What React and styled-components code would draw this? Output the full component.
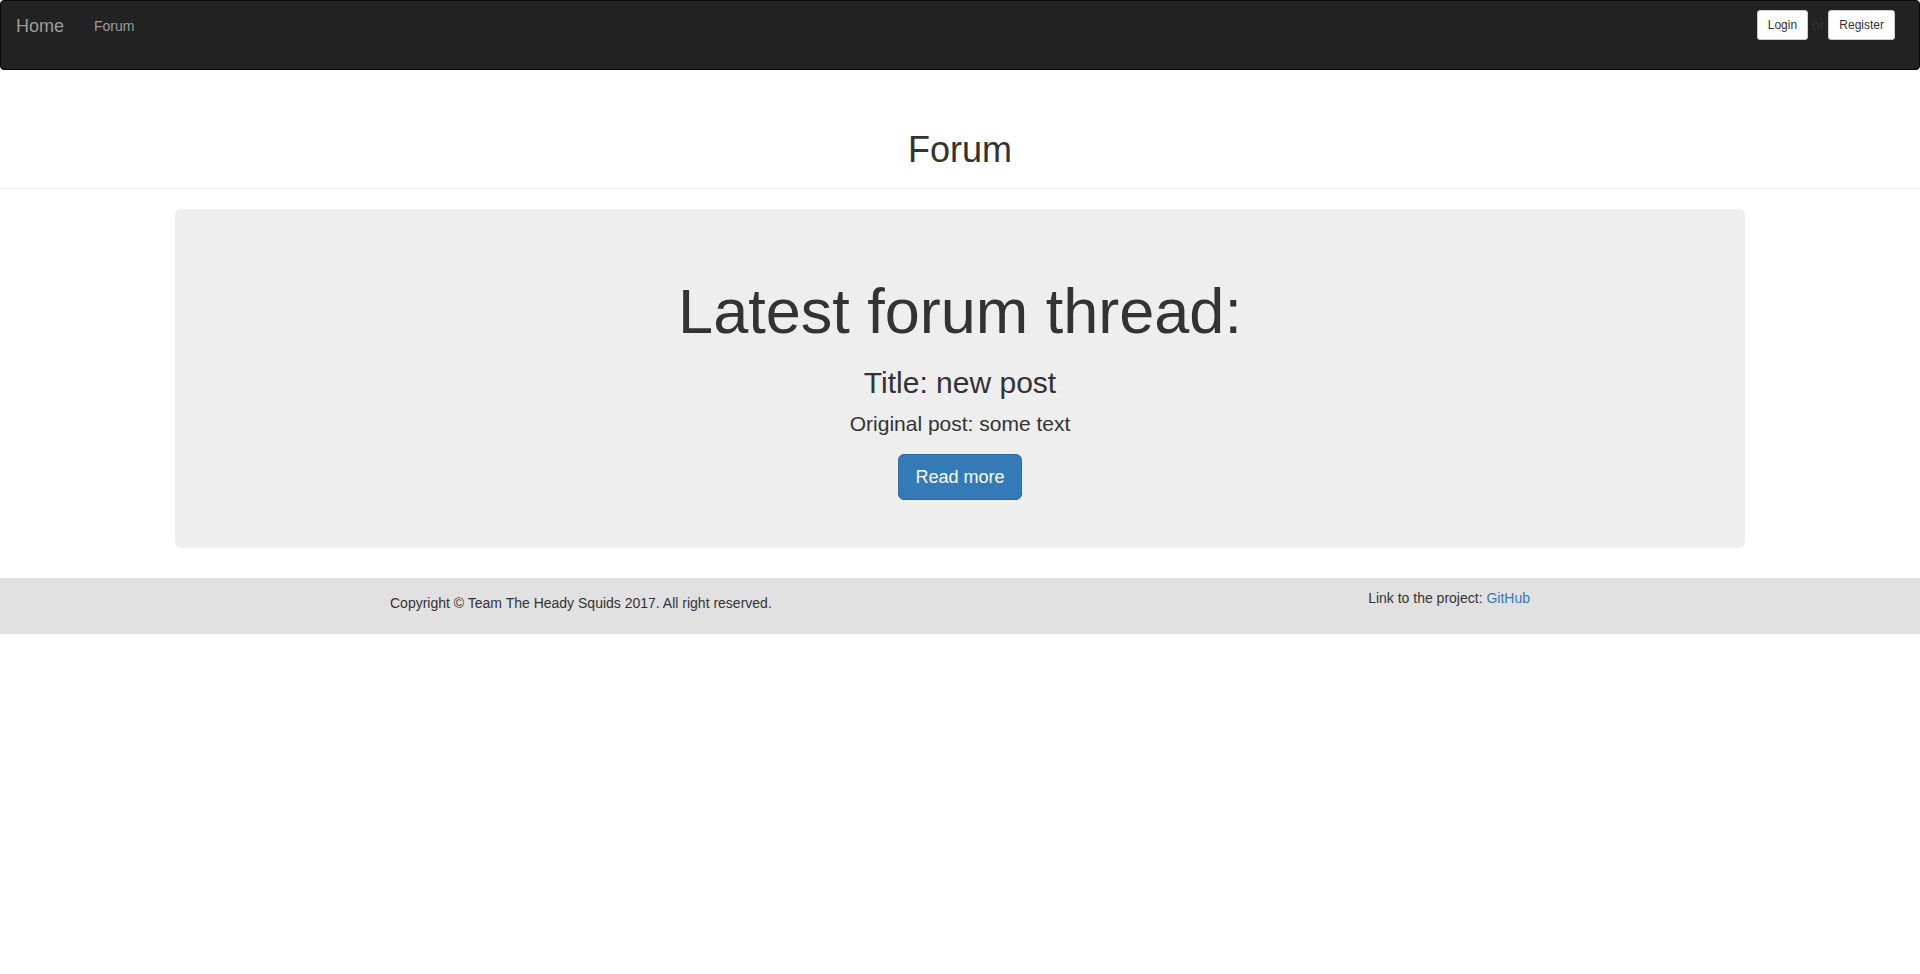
import React from "react";
import styled, { createGlobalStyle } from "styled-components";

const GlobalStyle = createGlobalStyle`
  html, body {
    margin: 0;
    padding: 0;
  }
  body {
    font-family: "Liberation Sans", Arial, Helvetica, sans-serif;
    font-size: 14px;
    line-height: 1.42857143;
    color: #333;
    background-color: #fff;
  }
  * {
    box-sizing: border-box;
  }
`;

const Navbar = styled.nav`
  display: flex;
  justify-content: space-between;
  align-items: flex-start;
  height: 70px;
  background-color: #222;
  border: 1px solid #080808;
  border-radius: 4px;
`;

const NavLeft = styled.div`
  display: flex;
  align-items: flex-start;
`;

const Brand = styled.a`
  padding: 15px;
  font-size: 18px;
  line-height: 20px;
  color: #9d9d9d;
  text-decoration: none;
`;

const NavLink = styled.a`
  padding: 15px;
  font-size: 14px;
  line-height: 20px;
  color: #9d9d9d;
  text-decoration: none;
`;

const NavRight = styled.div`
  display: flex;
  align-items: center;
  margin-top: 9px;
  margin-right: 24px;
`;

const SmallButton = styled.button`
  display: inline-block;
  padding: 5px 10px;
  font-family: inherit;
  font-size: 12px;
  line-height: 1.5;
  color: #333;
  background-color: #fff;
  border: 1px solid #ccc;
  border-radius: 3px;
  cursor: pointer;
`;

const Or = styled.span`
  white-space: pre;
  font-size: 14px;
  color: #333;
`;

const PageHeader = styled.div`
  margin-top: 60px;
  padding-bottom: 18px;
  border-bottom: 1px solid #eee;
  h1 {
    margin: 0;
    font-size: 36px;
    line-height: 40px;
    font-weight: 500;
    text-align: center;
  }
`;

const Jumbotron = styled.section`
  margin: 20px 175px 30px;
  padding: 48px 60px;
  background-color: #eee;
  border-radius: 6px;
  text-align: center;
  h1 {
    margin: 20px 0 10px;
    font-size: 63px;
    line-height: 1.1;
    font-weight: 500;
  }
  h2 {
    margin: 20px 0 10px;
    font-size: 30px;
    line-height: 1.1;
    font-weight: 500;
  }
  p {
    margin: 0 0 15px;
    font-size: 21px;
    font-weight: 200;
  }
`;

const ButtonRow = styled.div`
  display: flex;
  justify-content: center;
`;

const PrimaryButton = styled.a`
  display: inline-block;
  padding: 10px 16px;
  font-size: 18px;
  line-height: 1.3333333;
  color: #fff;
  background-color: #337ab7;
  border: 1px solid #2e6da4;
  border-radius: 6px;
  text-decoration: none;
  cursor: pointer;
`;

const Footer = styled.footer`
  height: 56px;
  padding-top: 10px;
  background-color: #e1e1e1;
`;

const FooterRow = styled.div`
  margin: 0 -15px;
`;

const FooterContainer = styled.div`
  display: grid;
  grid-template-columns: 1fr 1fr;
  width: 1170px;
  margin: 0 auto;
`;

const FooterCol = styled.div`
  padding: 0 15px;
  margin-top: ${(p) => (p.$offset ? "5px" : "0")};
  text-align: ${(p) => (p.$right ? "right" : "left")};
  a {
    color: #337ab7;
    text-decoration: none;
  }
`;

export default function App() {
  return (
    <>
      <GlobalStyle />
      <Navbar>
        <NavLeft>
          <Brand href="#">Home</Brand>
          <NavLink href="#">Forum</NavLink>
        </NavLeft>
        <NavRight>
          <SmallButton>Login</SmallButton>
          <Or> or </Or>
          <SmallButton>Register</SmallButton>
        </NavRight>
      </Navbar>

      <PageHeader>
        <h1>Forum</h1>
      </PageHeader>

      <Jumbotron>
        <h1>Latest forum thread:</h1>
        <h2>Title: new post</h2>
        <p>Original post: some text</p>
        <ButtonRow>
          <PrimaryButton href="#">Read more</PrimaryButton>
        </ButtonRow>
      </Jumbotron>

      <Footer>
        <FooterRow>
          <FooterContainer>
            <FooterCol $offset>
              Copyright © Team The Heady Squids 2017. All right reserved.
            </FooterCol>
            <FooterCol $right>
              Link to the project: <a href="#">GitHub</a>
            </FooterCol>
          </FooterContainer>
        </FooterRow>
      </Footer>
    </>
  );
}
